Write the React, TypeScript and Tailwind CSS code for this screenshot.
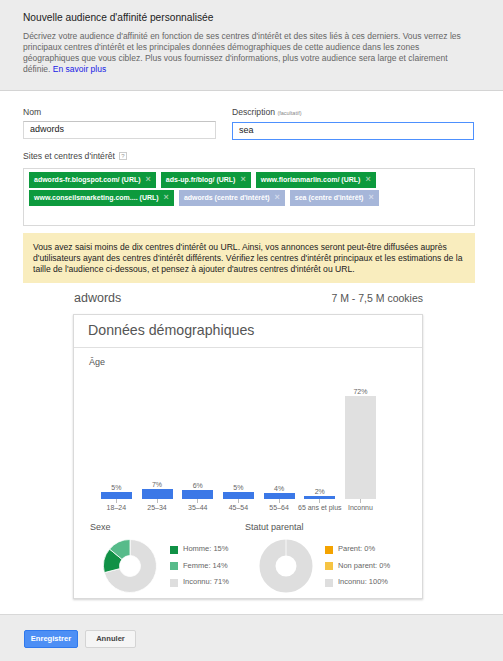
import React from 'react';

type Tag = { label: string; kind: 'url' | 'interest' };

const tags: Tag[] = [
  { label: 'adwords-fr.blogspot.com/ (URL)', kind: 'url' },
  { label: 'ads-up.fr/blog/ (URL)', kind: 'url' },
  { label: 'www.florianmarlin.com/ (URL)', kind: 'url' },
  { label: 'www.conseilsmarketing.com.... (URL)', kind: 'url' },
  { label: "adwords (centre d'intérêt)", kind: 'interest' },
  { label: "sea (centre d'intérêt)", kind: 'interest' },
];

const ages = [
  { label: '18–24', pct: 5 },
  { label: '25–34', pct: 7 },
  { label: '35–44', pct: 6 },
  { label: '45–54', pct: 5 },
  { label: '55–64', pct: 4 },
  { label: '65 ans et plus', pct: 2 },
  { label: 'Inconnu', pct: 72, unknown: true },
];

// donut slice, angles in degrees clockwise from 12 o'clock
function slice(a0: number, a1: number, R = 26.5, r = 10.5, c = 27) {
  const p = (a: number, rad: number) => {
    const t = ((a - 90) * Math.PI) / 180;
    return `${(c + rad * Math.cos(t)).toFixed(2)} ${(c + rad * Math.sin(t)).toFixed(2)}`;
  };
  const large = a1 - a0 > 180 ? 1 : 0;
  return `M ${p(a0, R)} A ${R} ${R} 0 ${large} 1 ${p(a1, R)} L ${p(a1, r)} A ${r} ${r} 0 ${large} 0 ${p(a0, r)} Z`;
}

const Legend = ({ items }: { items: { color: string; text: string }[] }) => (
  <div className="flex flex-col gap-[8px]">
    {items.map(it => (
      <div key={it.text} className="flex items-center gap-[5px] text-[7.5px] leading-[8.5px] text-[#666]">
        <span className="w-[8px] h-[8px]" style={{ background: it.color }} />
        <span>{it.text}</span>
      </div>
    ))}
  </div>
);

export default function App() {
  return (
    <div className="w-[503px] h-[661px] bg-white flex flex-col font-['Liberation_Sans',Arial,sans-serif] text-[#333]">
      {/* header */}
      <div className="h-[91px] shrink-0 bg-[#ececec] border-b border-[#d4d4d4] px-[23px] pt-[12px]">
        <h1 className="text-[10.2px] leading-[12px] text-[#222]">Nouvelle audience d'affinité personnalisée</h1>
        <div className="mt-[6.5px] text-[8.5px] leading-[11px] text-[#666] whitespace-nowrap">
          <div>Décrivez votre audience d'affinité en fonction de ses centres d'intérêt et des sites liés à ces derniers. Vous verrez les</div>
          <div>principaux centres d'intérêt et les principales données démographiques de cette audience dans les zones</div>
          <div>géographiques que vous ciblez. Plus vous fournissez d'informations, plus votre audience sera large et clairement</div>
          <div>
            définie. <a className="text-[#1a1ae6]">En savoir plus</a>
          </div>
        </div>
      </div>

      {/* body */}
      <div className="flex-1 px-[23px] pt-[16px]">
        <div className="flex gap-[16px]">
          <div className="w-[193px]">
            <div className="text-[8.6px] leading-[10px] text-[#444]">Nom</div>
            <div className="mt-[4px] h-[18px] border border-[#d9d9d9] border-t-[#c4c4c4] px-[6px] flex items-center text-[9px] text-[#222]">adwords</div>
          </div>
          <div className="w-[242px]">
            <div className="text-[8.6px] leading-[10px] text-[#444]">
              Description <span className="text-[5.5px] text-[#888]">(facultatif)</span>
            </div>
            <div className="mt-[4px] h-[18px] border border-[#4d90fe] px-[6px] flex items-center text-[9px] text-[#222]">sea</div>
          </div>
        </div>

        <div className="mt-[11px] flex items-center gap-[4px] text-[8.6px] leading-[10px] text-[#444]">
          Sites et centres d'intérêt
          <span className="w-[8px] h-[8px] border border-[#ccc] text-[6px] leading-[6px] text-[#999] flex items-center justify-center">?</span>
        </div>

        <div className="mt-[7px] h-[58px] w-[452px] border border-[#d9d9d9] pl-[5px] pr-[5px] pt-[3px]">
          <div className="flex flex-wrap gap-x-[5px] gap-y-[2px]">
            {tags.map(t => (
              <span
                key={t.label}
                className={
                  'h-[16px] flex items-center gap-[5px] px-[5px] text-[7px] font-bold text-white whitespace-nowrap ' +
                  (t.kind === 'url' ? 'bg-[#0d9a3d]' : 'bg-[#a6b6d9]')
                }
              >
                {t.label}
                <span className={t.kind === 'url' ? 'text-[#9ccfa9] text-[9px]' : 'text-[#d3dbec] text-[9px]'}>×</span>
              </span>
            ))}
          </div>
        </div>

        <div className="mt-[7px] w-[452px] bg-[#f9edbe] px-[10px] py-[8.5px] text-[8.6px] leading-[11px] text-[#222]">
          Vous avez saisi moins de dix centres d'intérêt ou URL. Ainsi, vos annonces seront peut-être diffusées auprès
          d'utilisateurs ayant des centres d'intérêt différents. Vérifiez les centres d'intérêt principaux et les estimations de la
          taille de l'audience ci-dessous, et pensez à ajouter d'autres centres d'intérêt ou URL.
        </div>

        <div className="ml-[50px] w-[350px]">
          <div className="mt-[7.5px] flex justify-between items-center text-[#555]">
            <span className="text-[12.5px] leading-[15px] pl-[1px]">adwords</span>
            <span className="text-[10.5px] leading-[15px]">7 M - 7,5 M cookies</span>
          </div>

          <div className="mt-[8.5px] h-[285px] border border-[#dadada] shadow-[0_1px_2px_rgba(0,0,0,0.18)] bg-white">
            <div className="h-[33px] border-b border-[#e0e0e0] pl-[14px] flex items-center text-[14.2px] text-[#555]">
              Données démographiques
            </div>
            <div className="pl-[15px] pt-[9px] text-[9px] leading-[10px] text-[#555]">Âge</div>

            {/* age chart */}
            <div className="ml-[22px] mt-[22px] flex items-end h-[110px]">
              {ages.map(a => (
                <div key={a.label} className="w-[40.7px] flex flex-col items-center justify-end">
                  <span className="text-[7px] leading-[9px] text-[#666]">{a.pct}%</span>
                  <div
                    className={'w-[31px] ' + (a.unknown ? 'bg-[#e0e0e0]' : 'bg-[#3b78e7]')}
                    style={{ height: Math.round(a.pct * 1.43) }}
                  />
                </div>
              ))}
            </div>
            <div className="ml-[22px] flex">
              {ages.map(a => (
                <div key={a.label} className="w-[40.7px] flex flex-col items-center">
                  <span className="w-px h-[4px] bg-[#bbb]" />
                  <span className="text-[7px] leading-[9px] text-[#666] whitespace-nowrap">{a.label}</span>
                </div>
              ))}
            </div>

            <div className="mt-[10px] flex pl-[16px]">
              <div className="w-[155px]">
                <div className="text-[9px] leading-[10px] text-[#555]">Sexe</div>
                <div className="mt-[7px] ml-[13px] flex items-center gap-[13px]">
                  <svg width="54" height="54" viewBox="0 0 54 54">
                    <path d={slice(0, 255.6)} fill="#dedede" stroke="#fff" strokeWidth="0.8" />
                    <path d={slice(255.6, 309.6)} fill="#109146" stroke="#fff" strokeWidth="0.8" />
                    <path d={slice(309.6, 360)} fill="#57bb8a" stroke="#fff" strokeWidth="0.8" />
                  </svg>
                  <Legend
                    items={[
                      { color: '#109146', text: 'Homme: 15%' },
                      { color: '#57bb8a', text: 'Femme: 14%' },
                      { color: '#dedede', text: 'Inconnu: 71%' },
                    ]}
                  />
                </div>
              </div>
              <div className="w-[170px]">
                <div className="text-[9px] leading-[10px] text-[#555]">Statut parental</div>
                <div className="mt-[7px] ml-[14px] flex items-center gap-[12px]">
                  <svg width="54" height="54" viewBox="0 0 54 54">
                    <circle cx="27" cy="27" r="18.5" fill="none" stroke="#dedede" strokeWidth="16" />
                    <line x1="27" y1="0" x2="27" y2="17" stroke="#fff" strokeWidth="0.8" />
                  </svg>
                  <Legend
                    items={[
                      { color: '#f4a300', text: 'Parent: 0%' },
                      { color: '#f6c443', text: 'Non parent: 0%' },
                      { color: '#dedede', text: 'Inconnu: 100%' },
                    ]}
                  />
                </div>
              </div>
            </div>
          </div>
        </div>
      </div>

      {/* footer */}
      <div className="h-[47px] shrink-0 bg-[#ececec] border-t border-[#d8d8d8] px-[24px] pt-[15px] flex gap-[7px] items-start">
        <button className="h-[18px] w-[54px] rounded-[2px] border border-[#3079ed] bg-[#4d8ff5] text-white text-[7.6px] font-bold">
          Enregistrer
        </button>
        <button className="h-[18px] w-[51px] rounded-[2px] border border-[#d4d4d4] bg-[#f5f5f5] text-[#444] text-[7.6px] font-bold">
          Annuler
        </button>
      </div>
    </div>
  );
}
